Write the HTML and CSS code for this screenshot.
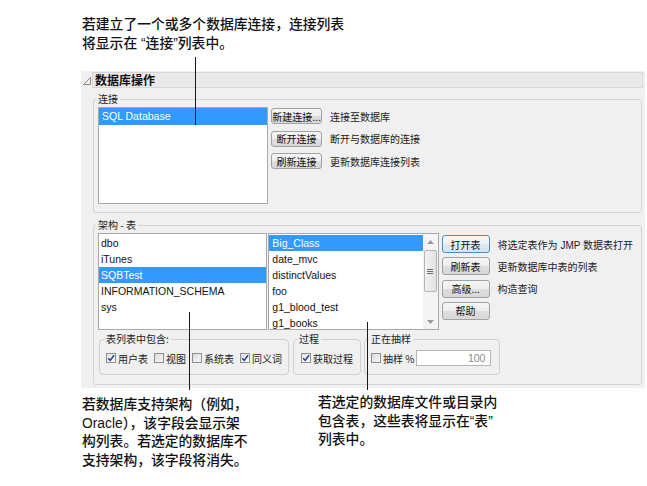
FILE: index.html
```html
<!DOCTYPE html>
<html lang="zh-CN">
<head>
<meta charset="utf-8">
<title>数据库操作</title>
<link rel="stylesheet" href="styles.css">
</head>
<body>
<div class="page">
  <p class="note note-top">若建立了一个或多个数据库连接，连接列表<br>将显示在 “连接”列表中。</p>

  <section class="panel">
    <div class="panel-head">
      <span class="twisty"><svg width="8" height="9" viewBox="0 0 8 9"><path d="M0.5 8.5 L7.5 1.5 L7.5 8.5 Z" fill="none" stroke="#8c8c8c"/></svg></span>
      <div class="head-bar">数据库操作</div>
    </div>

    <fieldset class="group group-conn">
      <legend>连接</legend>
      <div class="group-body">
        <ul class="list list-conn">
          <li class="sel">SQL Database</li>
        </ul>
        <div class="actions actions-conn">
          <div class="action"><button class="btn btn-conn">新建连接...</button><span class="desc">连接至数据库</span></div>
          <div class="action"><button class="btn btn-conn">断开连接</button><span class="desc">断开与数据库的连接</span></div>
          <div class="action"><button class="btn btn-conn">刷新连接</button><span class="desc">更新数据库连接列表</span></div>
        </div>
      </div>
    </fieldset>

    <fieldset class="group group-schema">
      <legend>架构 - 表</legend>
      <div class="group-body">
        <ul class="list list-schema">
          <li>dbo</li>
          <li>iTunes</li>
          <li class="sel">SQBTest</li>
          <li>INFORMATION_SCHEMA</li>
          <li>sys</li>
        </ul>
        <div class="list list-tables">
          <ul class="rows">
            <li class="sel">Big_Class</li>
            <li>date_mvc</li>
            <li>distinctValues</li>
            <li>foo</li>
            <li>g1_blood_test</li>
            <li>g1_books</li>
          </ul>
          <div class="scrollbar">
            <span class="arrow"><svg width="7" height="4" viewBox="0 0 7 4"><path d="M0 4 L3.5 0 L7 4 Z" fill="#9a9a9a"/></svg></span>
            <span class="thumb"><span class="grip"></span><span class="grip"></span><span class="grip"></span></span>
            <span class="track"></span>
            <span class="arrow"><svg width="7" height="4" viewBox="0 0 7 4"><path d="M0 0 L7 0 L3.5 4 Z" fill="#9a9a9a"/></svg></span>
          </div>
        </div>
        <div class="actions actions-tables">
          <div class="action"><button class="btn btn-table btn-focus">打开表</button><span class="desc">将选定表作为 JMP 数据表打开</span></div>
          <div class="action"><button class="btn btn-table">刷新表</button><span class="desc">更新数据库中表的列表</span></div>
          <div class="action"><button class="btn btn-table">高级...</button><span class="desc">构造查询</span></div>
          <div class="action"><button class="btn btn-table">帮助</button></div>
        </div>
      </div>

      <div class="subgroups">
        <fieldset class="sub sub-include">
          <legend>表列表中包含:</legend>
          <div class="opts">
            <span class="cb on"><svg width="8" height="8" viewBox="0 0 8 8"><path d="M1.2 4.2 L3.2 6.4 L7 1.2" fill="none" stroke="#1b3f9a" stroke-width="1.5"/></svg></span><span class="opt">用户表</span>
            <span class="cb"></span><span class="opt">视图</span>
            <span class="cb"></span><span class="opt">系统表</span>
            <span class="cb on"><svg width="8" height="8" viewBox="0 0 8 8"><path d="M1.2 4.2 L3.2 6.4 L7 1.2" fill="none" stroke="#1b3f9a" stroke-width="1.5"/></svg></span><span class="opt">同义词</span>
          </div>
        </fieldset>
        <fieldset class="sub sub-proc">
          <legend>过程</legend>
          <div class="opts">
            <span class="cb on"><svg width="8" height="8" viewBox="0 0 8 8"><path d="M1.2 4.2 L3.2 6.4 L7 1.2" fill="none" stroke="#1b3f9a" stroke-width="1.5"/></svg></span><span class="opt">获取过程</span>
          </div>
        </fieldset>
        <fieldset class="sub sub-sample">
          <legend>正在抽样</legend>
          <div class="opts">
            <span class="cb"></span><span class="opt">抽样 %</span>
            <span class="field">100</span>
          </div>
        </fieldset>
      </div>
    </fieldset>
  </section>

  <div class="notes-bottom">
    <p class="note note-left">若数据库支持架构（例如，<br>Oracle），该字段会显示架<br>构列表。若选定的数据库不<br>支持架构，该字段将消失。</p>
    <p class="note note-right">若选定的数据库文件或目录内<br>包含表，这些表将显示在“表”<br>列表中。</p>
  </div>

  <span class="callout callout-top"></span>
  <span class="callout callout-left"></span>
  <span class="callout callout-right"></span>
</div>
</body>
</html>
```

FILE: styles.css
```css
* { box-sizing: border-box; }

html, body {
  margin: 0;
  padding: 0;
  background: #ffffff;
}

.page {
  position: relative;
  width: 647px;
  height: 486px;
  overflow: hidden;
  font-family: "Liberation Sans", "Noto Sans CJK SC", sans-serif;
  color: #000;
}

/* annotations */
.note {
  margin: 0;
  font-size: 13.8px;
  line-height: 18.5px;
  font-weight: 500;
  color: #111;
  white-space: nowrap;
}

.note-top {
  margin-left: 82px;
  padding-top: 16px;
}

.notes-bottom {
  display: flex;
  align-items: flex-start;
}

.note-left {
  margin-left: 82px;
  margin-top: 8px;
  width: 236px;
}

.note-right {
  margin-top: 6px;
}

.callout {
  position: absolute;
  width: 1px;
  background: #1a1a1a;
}
.callout-top { left: 195px; top: 57px; height: 68px; }
.callout-left { left: 189px; top: 312px; height: 78px; }
.callout-right { left: 367px; top: 322px; height: 68px; }

/* panel */
.panel {
  margin: 18px 0 0 81px;
  width: 564px;
  height: 317px;
  padding: 1px 2px 0 2px;
  background: #f0f0f0;
  font-size: 10px;
}

.panel-head {
  display: flex;
  align-items: center;
  height: 16px;
}

.twisty {
  width: 9px;
  height: 16px;
  display: flex;
  align-items: center;
}
.twisty svg { display: block; }

.head-bar {
  flex: 1;
  height: 16px;
  border: 1px solid #d6d6d6;
  background: #e9e9e9;
  padding-left: 2px;
  font-family: "Noto Sans CJK SC", sans-serif;
  font-weight: bold;
  font-size: 12px;
  line-height: 14px;
  color: #111;
}

/* group boxes */
.group {
  margin: 5px 1px 0 10px;
  padding: 2px 8px 8px 4px;
  border: 1px solid #d4d4d4;
  border-radius: 3px;
  min-width: 0;
}

.group-schema {
  margin-top: 6px;
  padding-bottom: 9px;
}

legend {
  padding: 0 2px;
  margin-left: -2px;
  font-family: "Noto Sans CJK SC", sans-serif;
  font-size: 10px;
  line-height: 12px;
  color: #222;
}

.group-body {
  display: flex;
  align-items: flex-start;
}

/* lists */
.list {
  margin: 0;
  padding: 1px 0 0 0;
  list-style: none;
  background: #fff;
  border: 1px solid #a9a9a9;
  height: 97px;
  font-family: "Liberation Sans", sans-serif;
  font-size: 10.5px;
  color: #111;
}

.list li,
.rows li {
  height: 16px;
  line-height: 16px;
  padding-left: 2px;
  white-space: nowrap;
}

.list .sel,
.rows .sel {
  background: #3399ff;
  color: #fff;
}

.list-conn {
  width: 170px;
  padding-top: 0;
}
.list-conn li {
  height: 17px;
  line-height: 17px;
  padding-left: 3px;
}

.list-schema { width: 170px; }

.list-tables {
  width: 171px;
  margin-left: 1px;
  display: flex;
  padding: 0;
}

.rows {
  flex: 1;
  margin: 0;
  padding: 1px 0 0 0;
  list-style: none;
}
.rows li { padding-left: 3px; }

.scrollbar {
  width: 15px;
  height: 95px;
  background: #f4f4f4;
  display: flex;
  flex-direction: column;
  align-items: center;
}

.arrow {
  height: 15px;
  width: 15px;
  display: flex;
  align-items: center;
  justify-content: center;
}
.arrow svg { display: block; }

.thumb {
  width: 13px;
  height: 42px;
  margin-top: 1px;
  border: 1px solid #b6b6b6;
  border-radius: 2px;
  background: linear-gradient(to right, #f2f2f2, #e2e2e2);
  display: flex;
  flex-direction: column;
  align-items: center;
  justify-content: center;
  gap: 1px;
}

.grip {
  width: 6px;
  height: 1px;
  background: #6d6d6d;
}

.track { flex: 1; }

/* action buttons */
.actions {
  display: flex;
  flex-direction: column;
  margin-left: 3px;
}

.actions-conn {
  margin-top: 1px;
  gap: 6.5px;
}

.actions-tables {
  margin-top: 2px;
  gap: 4.33px;
}

.action {
  display: flex;
  align-items: center;
  gap: 8px;
}

.btn {
  margin: 0;
  padding: 0;
  font-family: "Noto Sans CJK SC", "Liberation Sans", sans-serif;
  font-size: 10px;
  color: #111;
  border: 1px solid #a2a2a2;
  border-radius: 3px;
  background: linear-gradient(#f6f6f6 0%, #ededed 50%, #dedede 51%, #d8d8d8 100%);
  white-space: nowrap;
  display: flex;
  align-items: center;
  justify-content: center;
}

.btn-conn {
  width: 51px;
  height: 16px;
}

.btn-table {
  width: 48px;
  height: 18px;
}

.btn-focus {
  border-color: #4c8ec4;
  background: linear-gradient(#f3f8fc 0%, #e9f1f8 50%, #dde9f3 51%, #d6e4f0 100%);
}

.desc {
  font-family: "Liberation Sans", "Noto Sans CJK SC", sans-serif;
  font-size: 10px;
  color: #222;
  white-space: nowrap;
}

/* sub group boxes */
.subgroups {
  display: flex;
  margin-top: 3px;
  margin-left: 1px;
}

.sub {
  margin: 0;
  padding: 6px 4px 9px 6px;
  border: 1px solid #d0d0d0;
  border-radius: 4px;
  min-width: 0;
}

.sub-include { width: 190px; }
.sub-proc { width: 68px; margin-left: 4px; padding-left: 7px; }
.sub-proc legend { margin-left: -4px; }
.sub-sample { width: 136px; margin-left: 3px; }

.opts {
  display: flex;
  align-items: center;
  height: 14px;
  font-family: "Noto Sans CJK SC", "Liberation Sans", sans-serif;
  font-size: 10px;
  color: #222;
  white-space: nowrap;
}

.cb {
  width: 10px;
  height: 10px;
  border: 1px solid #8e8f8f;
  background: linear-gradient(135deg, #dcdcdc, #f6f6f6);
  display: flex;
  align-items: center;
  justify-content: center;
  margin-right: 2px;
  flex: none;
}
.cb.on { background: linear-gradient(135deg, #e4e4e4, #fbfbfb); }
.cb svg { display: block; }

.opt { margin-right: 6px; }

.sub-sample .opt { margin-right: 2px; }

.field {
  width: 75px;
  height: 16px;
  border: 1px solid #b5b7bd;
  background: #fff;
  text-align: right;
  padding-right: 5px;
  font-family: "Liberation Sans", sans-serif;
  font-size: 10.5px;
  line-height: 14px;
  color: #8a8a8a;
}
```
